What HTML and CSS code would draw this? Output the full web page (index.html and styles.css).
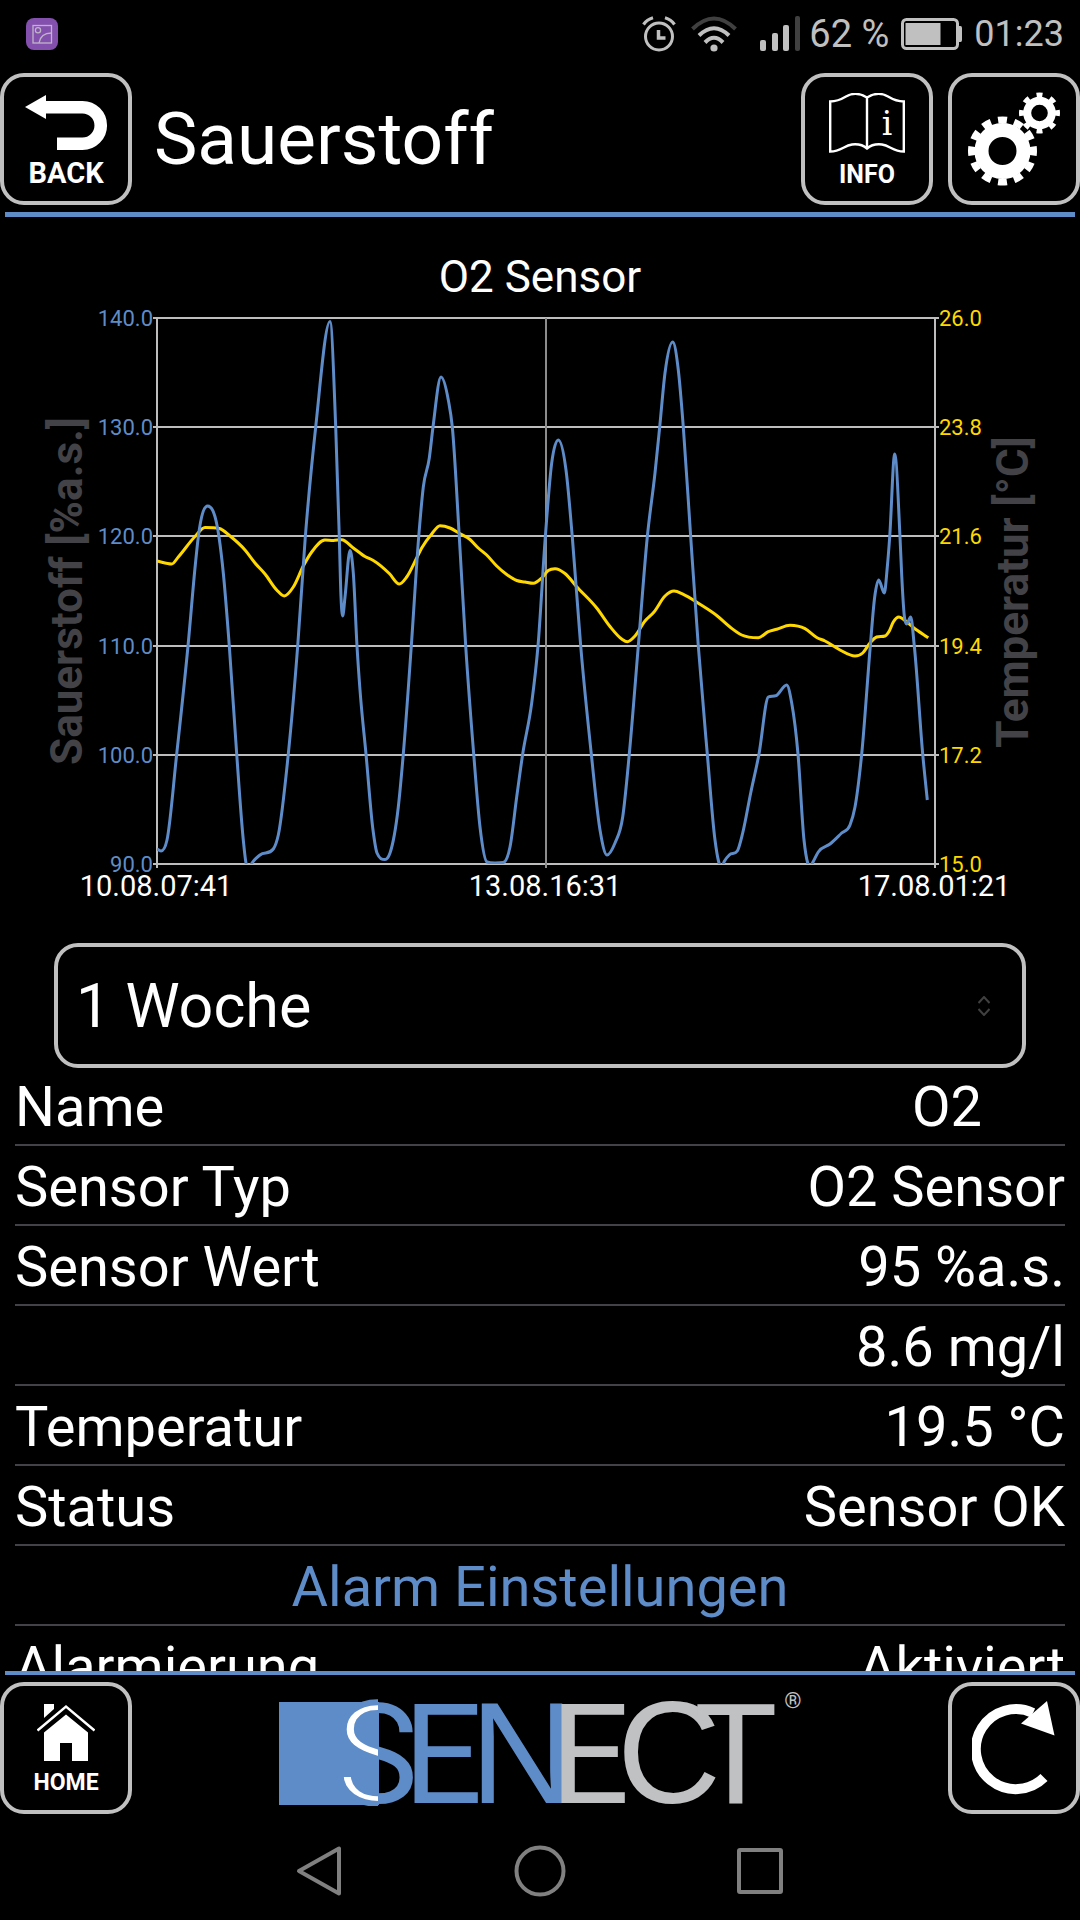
FILE: index.html
```html
<!DOCTYPE html>
<html lang="de">
<head>
<meta charset="utf-8">
<meta name="viewport" content="width=device-width, initial-scale=1">
<title>Sauerstoff</title>
<link rel="stylesheet" href="styles.css">
</head>
<body>
<div class="status-bar">
  <svg class="app-badge" width="32" height="32" viewBox="0 0 32 32" aria-hidden="true">
    <rect width="32" height="32" rx="8" fill="#8450ae"/>
    <g fill="none" stroke="#bfb4c6" stroke-width="1.3"><rect x="7" y="7.500" width="18.500" height="17.500"/><circle cx="12" cy="12.200" r="2.600"/><path d="M13 25c1-6 5-10 12.500-10"/></g>
  </svg>
  <div class="status-icons">
    <svg width="34" height="36" viewBox="0 0 34 36" fill="none" stroke="#c0c0c0" aria-hidden="true">
      <circle cx="17" cy="20.500" r="13.500" stroke-width="3"/><path d="M16.500 14v8h7" stroke-width="3.500"/><path d="M1.500 8.500Q5 3.500 11 1.800M32.500 8.500Q29 3.500 23 1.800" stroke-width="3.200"/>
    </svg>
    <svg width="48" height="36" viewBox="0 0 48 36" fill="none" stroke="#c0c0c0" stroke-width="4" aria-hidden="true">
      <path d="M2.500 13Q24-8 45.500 13" stroke="#404040"/><path d="M9 19.500Q24 5 39 19.500M15 26.500Q24 17 33 26.500"/><circle cx="24" cy="32" r="3.600" fill="#c0c0c0" stroke="none"/>
    </svg>
    <svg width="49" height="36" viewBox="0 0 49 36" fill="#c0c0c0" aria-hidden="true">
      <rect x="8" y="24" width="6" height="11" rx="2"/><rect x="20" y="17" width="6" height="18" rx="2"/><rect x="31" y="9" width="6" height="26" rx="2"/><rect x="43" y="0" width="5" height="35" rx="2" fill="#404040"/>
    </svg>
  </div>
  <div class="status-text">
    <span class="charge">62 %</span>
    <svg width="61" height="32" viewBox="0 0 61 32" aria-hidden="true">
      <rect x="1.500" y="1.500" width="55" height="29" rx="4" fill="none" stroke="#c0c0c0" stroke-width="3"/><rect x="4.500" y="5" width="35" height="22" fill="#c0c0c0"/><path d="M57 8h2.500q1.500 0 1.500 2v12q0 2-1.500 2H57z" fill="#c0c0c0"/>
    </svg>
    <span>01:23</span>
  </div>
</div>

<header class="app-header">
  <button class="tile labelled" type="button">
    <svg width="83" height="56" viewBox="0 0 83 56" aria-hidden="true">
      <path d="M0 12 21 0v24z" fill="#fff"/><path d="M18 12.200H57.500a18.250 18.250 0 0 1 0 36.500H32" fill="none" stroke="#fff" stroke-width="12.600"/>
    </svg>
    <span class="label-lg">BACK</span>
  </button>
  <h1>Sauerstoff</h1>
  <button class="tile labelled" type="button">
    <svg width="76" height="60" viewBox="0 0 76 60" fill="none" stroke="#fff" stroke-width="2.400" aria-hidden="true">
      <path d="M38 4.500C32 .800 24-.500 17 3.500 12 6.500 7 8.500 1.200 8.500v50C12 58.500 15 52.500 23 51.500c6-.700 11 .500 15 4 4-3.500 9-4.700 15-4 8 1 11 7 21.800 7v-50C69 8.500 64 6.500 59 3.500 52-.500 44 .800 38 4.500v51"/>
      <text class="book-i" x="58" y="42">i</text>
    </svg>
    <span class="label-md">INFO</span>
  </button>
  <button class="tile" type="button" aria-label="Einstellungen">
    <svg width="92" height="94" viewBox="0 0 92 94" fill="none" stroke="#fff" aria-hidden="true">
      <circle cx="34.500" cy="59" r="21" stroke-width="14"/>
      <circle cx="34.500" cy="59" r="31" stroke-width="7" pathLength="24" stroke-dasharray="1.100 .900" stroke-dashoffset=".550"/>
      <circle cx="71.500" cy="21" r="12.300" stroke-width="8"/>
      <circle cx="71.500" cy="21" r="18" stroke-width="5" pathLength="16" stroke-dasharray=".850 1.150" stroke-dashoffset=".425"/>
    </svg>
  </button>
</header>

<main>
  <svg class="chart" viewBox="5 217 1070 726" role="img" aria-label="O2 Sensor">
    <defs><clipPath id="plot"><rect x="157" y="317" width="779" height="547"/></clipPath></defs>
    <text class="chart-title" x="540" y="292">O2 Sensor</text>
    <g class="grid">
      <path d="M153 318H939M153 427H939M153 536H939M153 646H939M153 755H939M153 864H939"/>
      <path d="M157 318V868M935 318V868"/>
      <path class="mid" d="M546 318V868"/>
    </g>
    <g clip-path="url(#plot)">
      <path id="temperature" class="line temperature"/>
      <path id="oxygen" class="line oxygen"/>
    </g>
    <g class="ticks left">
      <text x="153" y="326">140.0</text><text x="153" y="435">130.0</text><text x="153" y="544">120.0</text>
      <text x="153" y="654">110.0</text><text x="153" y="763">100.0</text><text x="153" y="872">90.0</text>
    </g>
    <g class="ticks right">
      <text x="939" y="326">26.0</text><text x="939" y="435">23.8</text><text x="939" y="544">21.6</text>
      <text x="939" y="654">19.4</text><text x="939" y="763">17.2</text><text x="939" y="872">15.0</text>
    </g>
    <g class="dates">
      <text x="156" y="896">10.08.07:41</text><text x="545" y="896">13.08.16:31</text><text x="934" y="896">17.08.01:21</text>
    </g>
    <g class="axis-name">
      <text transform="translate(82 591) rotate(-90)">Sauerstoff [%a.s.]</text>
      <text transform="translate(1028 592) rotate(-90)">Temperatur [°C]</text>
    </g>
  </svg>

  <div class="range">
    <select aria-label="Zeitraum"><option>1 Woche</option></select>
    <svg width="12" height="20" viewBox="0 0 12 20" fill="none" stroke="#404040" stroke-width="2" aria-hidden="true"><path d="M.500 7 6 1l5.500 6M.500 13 6 19l5.500-6"/></svg>
  </div>

  <table class="details">
    <tr><th scope="row"><label for="sensor-name">Name</label></th><td><input id="sensor-name" type="text" value="O2"></td></tr>
    <tr><th scope="row">Sensor Typ</th><td>O2 Sensor</td></tr>
    <tr><th scope="row">Sensor Wert</th><td>95 %a.s.</td></tr>
    <tr><th></th><td>8.6 mg/l</td></tr>
    <tr><th scope="row">Temperatur</th><td>19.5 °C</td></tr>
    <tr><th scope="row">Status</th><td>Sensor OK</td></tr>
    <tr><th class="section" colspan="2">Alarm Einstellungen</th></tr>
    <tr><th scope="row">Alarmierung</th><td>Aktiviert</td></tr>
  </table>
</main>

<footer class="app-footer">
  <button class="tile labelled" type="button">
    <svg width="58" height="57" viewBox="0 0 58 57" fill="#fff" aria-hidden="true">
      <path d="M7 0H17V5L7 14z"/><path d="M.500 26.500 29 2.500l28.500 24" fill="none" stroke="#fff" stroke-width="2.400"/><path d="M29 10.500 51 28.500V57H35V39H23V57H7V28.500z"/>
    </svg>
    <span class="label-sm">HOME</span>
  </button>
  <svg class="logo" width="523" height="115" viewBox="0 0 523 115" role="img" aria-label="SENECT">
    <defs>
      <clipPath id="logo-left"><rect width="99" height="115"/></clipPath>
      <clipPath id="logo-right"><rect x="99" width="424" height="115"/></clipPath>
    </defs>
    <rect y="11" width="100" height="103" fill="#5e8cc9"/>
    <text class="logo-cut" x="56" y="112" clip-path="url(#logo-left)">S</text>
    <text class="logo-word" y="112" clip-path="url(#logo-right)"><tspan class="blue" x="56 124">SE</tspan><tspan class="blue wide" x="191">N</tspan><tspan class="grey" x="271">E</tspan><tspan class="grey wide" x="338">C</tspan><tspan class="grey" x="415">T</tspan></text>
    <text class="logo-mark" x="514" y="17">®</text>
  </svg>
  <button class="tile" type="button" aria-label="Aktualisieren">
    <svg width="84" height="94" viewBox="0 0 84 94" aria-hidden="true">
      <path d="M72 76.500A40 40 0 1 1 61 12" fill="none" stroke="#fff" stroke-width="10"/><path d="M75 0 82.500 34.500 49 22.500z" fill="#fff"/>
    </svg>
  </button>
</footer>

<nav class="system-nav">
  <button type="button" aria-label="Zurück"><svg width="52" height="52" viewBox="0 0 52 52"><path d="M45 3.500V48.500L5 26z"/></svg></button>
  <button type="button" aria-label="Startbildschirm"><svg width="52" height="52" viewBox="0 0 52 52"><circle cx="26" cy="26" r="23.500"/></svg></button>
  <button type="button" aria-label="Übersicht"><svg width="52" height="52" viewBox="0 0 52 52"><rect x="5" y="5" width="42" height="42" rx="1"/></svg></button>
</nav>
<script src="chart.js"></script>
</body>
</html>
```
FILE: styles.css
```css
* { box-sizing: border-box; }

body {
  margin: 0;
  height: 100vh;
  display: flex;
  flex-direction: column;
  overflow: hidden;
  background: #000;
  color: #fff;
  font-family: Roboto, sans-serif;
}

svg { display: block; flex: none; }

button {
  padding: 0;
  background: none;
  border: 0;
  color: inherit;
}

/* Status bar */
.status-bar {
  flex: none;
  display: flex;
  align-items: center;
  gap: 8px;
  height: 73px;
  padding: 0 16px 6px 26px;
  color: #c0c0c0;
  font-size: 36px;
}
.status-icons, .status-text { display: flex; align-items: center; gap: 14px; }
.status-text { gap: 12px; }
.status-icons { margin-left: auto; }
.charge { font-size: 38px; }

/* Square icon buttons */
.tile {
  flex: none;
  display: flex;
  flex-direction: column;
  align-items: center;
  justify-content: center;
  gap: 10px;
  width: 132px;
  height: 132px;
  border: 4px solid #c0c0c0;
  border-radius: 24px;
  font-family: Roboto, sans-serif;
  font-weight: 700;
  line-height: 24px;
}
.labelled { padding-top: 2px; }
.label-lg { font-size: 29px; }
.label-md { font-size: 25px; }
.label-sm { font-size: 23px; }
.book-i {
  font: 33px "DejaVu Serif", serif;
  text-anchor: middle;
  fill: #fff;
  stroke: none;
}

.app-header {
  flex: none;
  display: flex;
  align-items: center;
  gap: 15px;
  padding-bottom: 7px;
}
.app-header h1 {
  flex: 1;
  margin: 0 0 0 7px;
  font-size: 73px;
  font-weight: 400;
  line-height: 132px;
}

main {
  flex: 1;
  min-height: 0;
  overflow: hidden;
  margin: 0 5px;
  border-top: 5px solid #5e8cc9;
  border-bottom: 4px solid #5e8cc9;
}

/* Chart */
.chart { width: 100%; height: auto; }
.chart-title { font-size: 44px; fill: #fff; text-anchor: middle; }
.grid path { fill: none; stroke: #bdbdbd; stroke-width: 2; }
.grid .mid { stroke: #8c8c8c; }
.line { fill: none; stroke-width: 3; stroke-linejoin: round; }
.oxygen { stroke: #5e8cc9; }
.temperature { stroke: #ffd800; }
.ticks { font-size: 22px; }
.ticks.left { fill: #5e8cc9; text-anchor: end; }
.ticks.right { fill: #ffd800; }
.dates { font-size: 29px; fill: #fff; text-anchor: middle; }
.axis-name { font-size: 44px; font-weight: 700; fill: #434347; text-anchor: middle; }

/* Time range */
.range { position: relative; margin: 0 49px; }
.range select {
  display: block;
  width: 100%;
  height: 125px;
  padding: 0 60px 0 18px;
  appearance: none;
  background: #000;
  border: 4px solid #c0c0c0;
  border-radius: 24px;
  color: #fff;
  font: 61px Roboto, sans-serif;
}
.range svg {
  position: absolute;
  top: 53px;
  right: 36px;
  pointer-events: none;
}

/* Sensor details */
.details {
  width: calc(100% - 20px);
  margin: 0 10px;
  border-collapse: separate;
  border-spacing: 0;
  font-size: 56px;
  line-height: 74px;
}
.details th, .details td {
  height: 80px;
  padding: 4px 0 0;
  border-bottom: 2px solid #434347;
  font-weight: 400;
  text-align: left;
  white-space: nowrap;
}
.details td { text-align: right; }
.details tr:first-child > * { height: 78px; padding-top: 2px; }
.details .section { color: #5e8cc9; text-align: center; }
.details input {
  display: block;
  width: 236px;
  height: 74px;
  margin-left: auto;
  padding: 0;
  background: none;
  border: 0;
  color: inherit;
  font: inherit;
  text-align: center;
}

/* Footer */
.app-footer {
  flex: none;
  display: flex;
  align-items: center;
  justify-content: space-between;
  padding-top: 7px;
}
.logo text { font-family: Roboto, sans-serif; }
.logo .logo-word, .logo .logo-cut { font-size: 140px; }
.logo .logo-cut { fill: #fff; stroke: #5e8cc9; stroke-width: 6; }
.logo .wide { font-family: "Liberation Sans", sans-serif; font-size: 144px; }
.logo .blue { fill: #5e8cc9; }
.logo .grey { fill: #c0c1c3; }
.logo .logo-mark { font-size: 22px; fill: #c0c1c3; text-anchor: middle; }

/* System navigation */
.system-nav {
  flex: none;
  display: flex;
  align-items: center;
  justify-content: center;
  gap: 168px;
  height: 106px;
  padding-top: 8px;
}
.system-nav svg {
  fill: none;
  stroke: #808080;
  stroke-width: 4;
  stroke-linejoin: round;
}
```
FILE: chart.js
```js
// Measured points of the two series, in chart coordinates.
const oxygen = [
  [157,849],[161,851],[167,840],[176.7,754],[188,646],[195.3,565],[198.3,537],[207.7,506],[219,537],[223.3,573],[229.3,646],
  [236.7,754],[243.3,840],[246,863],[249,868],[252,863],[260,855],[273.3,849],[278.3,835],[288.3,754],[297.7,646],[305.3,537],
  [315.7,427],[330,321.5],[335.7,427],[339.3,537],[341,597],[342.7,616],[345,597],[350,550.5],[353.3,573],[357,646],[360,690],
  [366,754],[373,830],[377,853],[385,859.5],[390,853],[398.3,807],[403.3,754],[411.3,646],[418.7,537],[423.3,487],[429.3,458],
  [433,427],[441,377],[448.3,400],[452.3,427],[459.3,537],[465.7,646],[473.7,754],[480,827],[487,862],[495,863],[503.3,862.5],
  [510,847],[516.7,797],[522.7,754],[531.7,703],[538,646],[545.3,537],[551.7,463],[558.3,440],[566,470],[572.3,537],[580.7,646],
  [591.3,754],[600,830],[607,855],[615,843],[622.7,817],[629.3,754],[638.3,646],[647.3,537],[655,473],[659.7,427],[665,373],
  [672.7,342],[678.3,370],[683.3,427],[690.7,537],[698.3,646],[707.3,754],[715,840],[718.5,861],[721.5,867],[724.5,861],
  [729.3,855],[737.3,851],[742.7,833],[750.7,793],[759,754],[768.3,697],[776,695.7],[786.7,685],[791.7,703],[798,754],[804,840],
  [807.7,863],[810,867],[813,862],[818.3,852],[830,844],[841.7,833],[850,825],[855,807],[861.7,754],[870.3,646],[874.7,597],
  [878.7,580],[884.3,593],[887.3,567],[889.7,537],[894.7,454],[900,537],[901.7,575],[904.3,616],[906.7,624],[910.7,617],
  [914.3,646],[922.7,754],[927.3,800]
];
const temperature = [
  [157,561],[171.7,564],[178.3,557],[195,536.5],[205,527.5],[219.3,528.5],[230,536],[245,550],[255,563],[265,574],[276.7,590],
  [284.3,596],[293.3,587],[303.3,566],[311.7,552],[325,540],[333.3,540.5],[341.7,539.7],[353.3,548],[365,556.5],[373.3,560.5],
  [389.3,573.5],[399.3,584],[406.7,577],[416.7,558],[421.7,548],[431.7,534],[440,525.7],[450,528],[459.3,533.3],[470,539.5],
  [478.3,548],[486.7,555],[496.7,566],[506.7,574.5],[516.7,580.5],[525,582],[533.3,583.3],[541.7,578],[548.3,570.5],[555,568.7],
  [565,573.5],[576.7,586.7],[596.7,608],[610,626.5],[621.7,639],[627.3,641.7],[635,636],[645,621],[654,612],[665,596],[674,591],
  [683.3,594.3],[700,604.3],[716.7,615.5],[730,627],[741.7,635],[758.3,637.7],[768.3,631.7],[776.7,629.3],[790,625.3],
  [805,628.7],[816.7,637.5],[825,641],[840,650],[855,656],[862.7,653],[870,643],[876.7,637],[885,636],[889.3,631],[893.3,622],
  [899,617],[905,620.5],[913.3,627.5],[928.3,637.7]
];

// Cubic curve through the points that does not overshoot at peaks.
function smoothPath(points) {
  const n = points.length;
  const width = i => points[i + 1][0] - points[i][0];
  const slope = i => (points[i + 1][1] - points[i][1]) / width(i);
  const tangent = i => {
    if (i === 0) return slope(0);
    if (i === n - 1) return slope(n - 2);
    const a = slope(i - 1), b = slope(i);
    if (a * b <= 0) return 0;
    const mean = (a * width(i) + b * width(i - 1)) / (width(i) + width(i - 1));
    const limit = 3 * Math.min(Math.abs(a), Math.abs(b));
    return Math.sign(mean) * Math.min(Math.abs(mean), limit);
  };
  let d = `M${points[0]}`;
  for (let i = 0; i < n - 1; i++) {
    const [x0, y0] = points[i], [x1, y1] = points[i + 1];
    const h = (x1 - x0) / 3;
    d += `C${x0 + h},${y0 + h * tangent(i)} ${x1 - h},${y1 - h * tangent(i + 1)} ${x1},${y1}`;
  }
  return d;
}

document.getElementById('oxygen').setAttribute('d', smoothPath(oxygen));
document.getElementById('temperature').setAttribute('d', smoothPath(temperature));
```
